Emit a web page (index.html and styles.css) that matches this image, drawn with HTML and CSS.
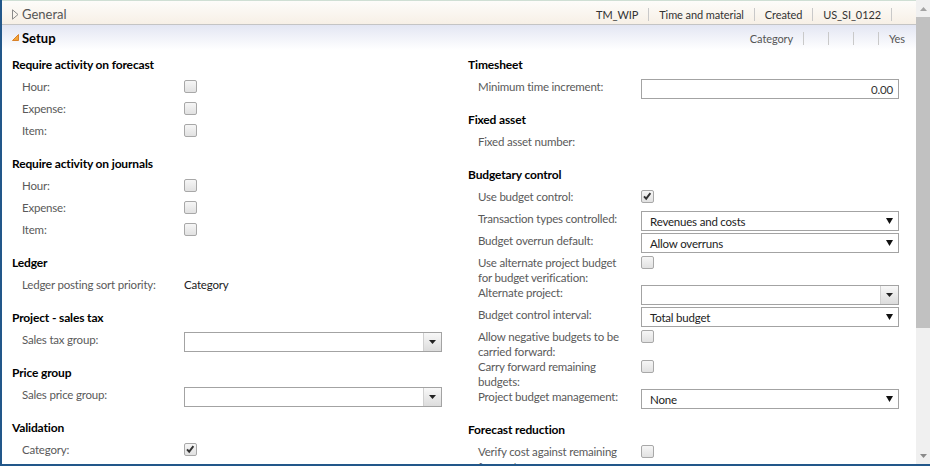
FILE: index.html
```html
<!DOCTYPE html>
<html>
<head>
<meta charset="utf-8">
<link rel="stylesheet" href="styles.css">
</head>
<body>
<div class="window">
  <div class="main">
    <div class="bar general">
      <svg class="tri-out" viewBox="0 0 7 11" width="7" height="11"><path d="M0.5 0.8 L6 5.5 L0.5 10.2 Z" fill="none" stroke="#8a8a8a" stroke-width="1"/></svg>
      <span class="bar-title">General</span>
      <div class="summary">
        <span class="item">TM_WIP</span>
        <span class="item">Time and material</span>
        <span class="item">Created</span>
        <span class="item">US_SI_0122</span>
      </div>
    </div>
    <div class="bar setup">
      <svg class="tri-open" viewBox="0 0 7 7" width="7" height="7"><path d="M6.5 0.5 L6.5 6.5 L0.5 6.5 Z" fill="#f3a53a" stroke="#d9822a" stroke-width="1"/></svg>
      <span class="bar-title bold">Setup</span>
      <div class="summary small">
        <span class="item">Category</span>
        <span class="item empty"></span>
        <span class="item empty"></span>
        <span class="item empty"></span>
        <span class="item last">Yes</span>
      </div>
    </div>
    <div class="content">
      <div class="col">
        <div class="sec">
          <h3>Require activity on forecast</h3>
          <div class="row"><span class="lbl">Hour:</span><span class="ctl"><span class="cb"></span></span></div>
          <div class="row"><span class="lbl">Expense:</span><span class="ctl"><span class="cb"></span></span></div>
          <div class="row"><span class="lbl">Item:</span><span class="ctl"><span class="cb"></span></span></div>
        </div>
        <div class="sec">
          <h3>Require activity on journals</h3>
          <div class="row"><span class="lbl">Hour:</span><span class="ctl"><span class="cb"></span></span></div>
          <div class="row"><span class="lbl">Expense:</span><span class="ctl"><span class="cb"></span></span></div>
          <div class="row"><span class="lbl">Item:</span><span class="ctl"><span class="cb"></span></span></div>
        </div>
        <div class="sec">
          <h3>Ledger</h3>
          <div class="row"><span class="lbl">Ledger posting sort priority:</span><span class="ctl"><span class="static">Category</span></span></div>
        </div>
        <div class="sec">
          <h3>Project - sales tax</h3>
          <div class="row"><span class="lbl">Sales tax group:</span><span class="ctl"><span class="combo"><span class="combo-text"></span><span class="combo-btn"><svg viewBox="0 0 7 4" width="7" height="4"><path d="M0 0 H7 L3.5 4 Z" fill="#222"/></svg></span></span></span></div>
        </div>
        <div class="sec">
          <h3>Price group</h3>
          <div class="row"><span class="lbl">Sales price group:</span><span class="ctl"><span class="combo"><span class="combo-text"></span><span class="combo-btn"><svg viewBox="0 0 7 4" width="7" height="4"><path d="M0 0 H7 L3.5 4 Z" fill="#222"/></svg></span></span></span></div>
        </div>
        <div class="sec">
          <h3>Validation</h3>
          <div class="row"><span class="lbl">Category:</span><span class="ctl"><span class="cb checked"><svg viewBox="0 0 12 12" width="12" height="12"><path d="M3 6.3 L5.2 8.7 L9.4 3.2" fill="none" stroke="#333" stroke-width="1.9"/></svg></span></span></div>
        </div>
      </div>
      <div class="col right">
        <div class="sec">
          <h3>Timesheet</h3>
          <div class="row"><span class="lbl">Minimum time increment:</span><span class="ctl"><span class="input num">0.00</span></span></div>
        </div>
        <div class="sec">
          <h3>Fixed asset</h3>
          <div class="row"><span class="lbl">Fixed asset number:</span><span class="ctl"></span></div>
        </div>
        <div class="sec">
          <h3>Budgetary control</h3>
          <div class="row"><span class="lbl">Use budget control:</span><span class="ctl"><span class="cb checked"><svg viewBox="0 0 12 12" width="12" height="12"><path d="M3 6.3 L5.2 8.7 L9.4 3.2" fill="none" stroke="#333" stroke-width="1.9"/></svg></span></span></div>
          <div class="row"><span class="lbl">Transaction types controlled:</span><span class="ctl"><span class="select"><span class="sel-text">Revenues and costs</span><svg viewBox="0 0 7 6" width="7" height="6"><path d="M0 0 H7 L3.5 6 Z" fill="#111"/></svg></span></span></div>
          <div class="row"><span class="lbl">Budget overrun default:</span><span class="ctl"><span class="select"><span class="sel-text">Allow overruns</span><svg viewBox="0 0 7 6" width="7" height="6"><path d="M0 0 H7 L3.5 6 Z" fill="#111"/></svg></span></span></div>
          <div class="row"><span class="lbl">Use alternate project budget<br>for budget verification:</span><span class="ctl"><span class="cb"></span></span></div>
          <div class="row"><span class="lbl">Alternate project:</span><span class="ctl"><span class="combo"><span class="combo-text"></span><span class="combo-btn"><svg viewBox="0 0 7 4" width="7" height="4"><path d="M0 0 H7 L3.5 4 Z" fill="#222"/></svg></span></span></span></div>
          <div class="row"><span class="lbl">Budget control interval:</span><span class="ctl"><span class="select"><span class="sel-text">Total budget</span><svg viewBox="0 0 7 6" width="7" height="6"><path d="M0 0 H7 L3.5 6 Z" fill="#111"/></svg></span></span></div>
          <div class="row"><span class="lbl">Allow negative budgets to be<br>carried forward:</span><span class="ctl"><span class="cb"></span></span></div>
          <div class="row"><span class="lbl">Carry forward remaining<br>budgets:</span><span class="ctl"><span class="cb"></span></span></div>
          <div class="row"><span class="lbl">Project budget management:</span><span class="ctl"><span class="select"><span class="sel-text">None</span><svg viewBox="0 0 7 6" width="7" height="6"><path d="M0 0 H7 L3.5 6 Z" fill="#111"/></svg></span></span></div>
        </div>
        <div class="sec">
          <h3>Forecast reduction</h3>
          <div class="row"><span class="lbl">Verify cost against remaining<br>forecast:</span><span class="ctl"><span class="cb"></span></span></div>
        </div>
      </div>
    </div>
  </div>
  <div class="scrollbar">
    <div class="sb-arrow"><svg viewBox="0 0 7 4" width="7" height="4"><path d="M0 4 H7 L3.5 0 Z" fill="#a3a3a3"/></svg></div>
    <div class="sb-thumb"></div>
    <div class="sb-track"></div>
    <div class="sb-arrow"><svg viewBox="0 0 7 4" width="7" height="4"><path d="M0 0 H7 L3.5 4 Z" fill="#8a8a8a"/></svg></div>
  </div>
</div>
</body>
</html>
```

FILE: styles.css
```css
html, body {
  margin: 0;
  padding: 0;
  background: #fff;
  overflow: hidden;
}
body {
  font-family: Lato, "Open Sans", sans-serif;
  font-size: 11.5px;
  letter-spacing: -0.2px;
  color: #333;
}
.window {
  width: 930px;
  height: 466px;
  box-sizing: border-box;
  border-bottom: 2px solid #22578a;
  display: flex;
}
.main {
  flex: 1;
  min-width: 0;
  height: 464px;
  overflow: hidden;
  border-left: 2px solid #22578a;
  display: flex;
  flex-direction: column;
}
.bar {
  display: flex;
  align-items: center;
  flex: none;
}
.general {
  height: 20px;
  padding-top: 3px;
  border-top: 1px solid #cfdfd4;
  border-bottom: 1px solid #c4c4c4;
  background: linear-gradient(#fdfcfa, #f7f0e6);
  padding-left: 10px;
}
.setup {
  height: 25px;
  background: linear-gradient(#e3e6f3, #ffffff);
  padding-left: 10px;
}
.tri-out {
  margin-right: 3px;
}
.tri-open {
  margin-right: 3px;
  margin-top: -1px;
}
.bar-title {
  font-size: 13px;
  letter-spacing: 0;
  color: #555;
}
.bar-title.bold {
  font-weight: bold;
  color: #000;
}
.summary {
  margin-left: auto;
  display: flex;
  align-items: center;
  padding-right: 24px;
}
.summary .item {
  padding: 0 10px;
  border-right: 1px solid #c9c9c9;
  line-height: 13px;
  font-size: 11px;
  letter-spacing: -0.1px;
  color: #333;
}
.summary .item.empty {
  padding: 0 12px;
  height: 13px;
}
.summary.small {
  padding-right: 0;
  padding-top: 1px;
}
.summary.small .item {
  color: #555;
  font-size: 11px;
}
.summary.small .item.last {
  border-right: none;
  padding-right: 11px;
}
.content {
  flex: 1;
  display: grid;
  grid-template-columns: 430px 432px;
  column-gap: 26px;
  padding: 5px 0 0 10px;
  align-items: start;
}
.sec {
  margin-bottom: 9px;
}
.sec h3 {
  margin: 0 0 4px;
  height: 20px;
  line-height: 20px;
  font-size: 12px;
  letter-spacing: -0.15px;
  font-weight: bold;
  color: #000;
}
.row {
  display: flex;
  min-height: 22px;
  padding-left: 10px;
}
.lbl {
  width: 162px;
  flex: none;
  line-height: 15px;
  white-space: nowrap;
  color: #5a5a5a;
}
.right .lbl {
  width: 163px;
}
.ctl {
  width: 258px;
  flex: none;
  display: flex;
  align-items: flex-start;
}
.static {
  line-height: 15px;
  color: #222;
}
.cb {
  display: block;
  width: 11px;
  height: 11px;
  margin-top: 1px;
  border: 1px solid #a8a8a8;
  border-radius: 2px;
  background: linear-gradient(#f6f6f6, #e1e1e1);
}
.cb svg {
  display: block;
  margin: -1px 0 0 -1px;
}
.input, .select, .combo {
  box-sizing: border-box;
  width: 258px;
  height: 20px;
  border: 1px solid #a3a3a3;
  background: #fff;
  display: flex;
  align-items: center;
}
.input.num {
  justify-content: flex-end;
  padding-right: 5px;
  color: #333;
}
.select {
  padding: 0 5px 0 8px;
  justify-content: space-between;
}
.sel-text {
  color: #222;
  padding-top: 1px;
}
.combo-text {
  flex: 1;
}
.combo-btn {
  width: 17px;
  height: 18px;
  border-left: 1px solid #d0d0d0;
  background: linear-gradient(#f8f8f8, #dcdcdc);
  display: flex;
  align-items: center;
  justify-content: center;
}
.scrollbar {
  width: 14px;
  height: 464px;
  background: #f0f0f0;
  display: flex;
  flex-direction: column;
  flex: none;
}
.sb-arrow {
  height: 17px;
  display: flex;
  align-items: center;
  justify-content: center;
  flex: none;
}
.sb-thumb {
  height: 311px;
  background: #c1c1c1;
  flex: none;
}
.sb-track {
  flex: 1;
}
```
